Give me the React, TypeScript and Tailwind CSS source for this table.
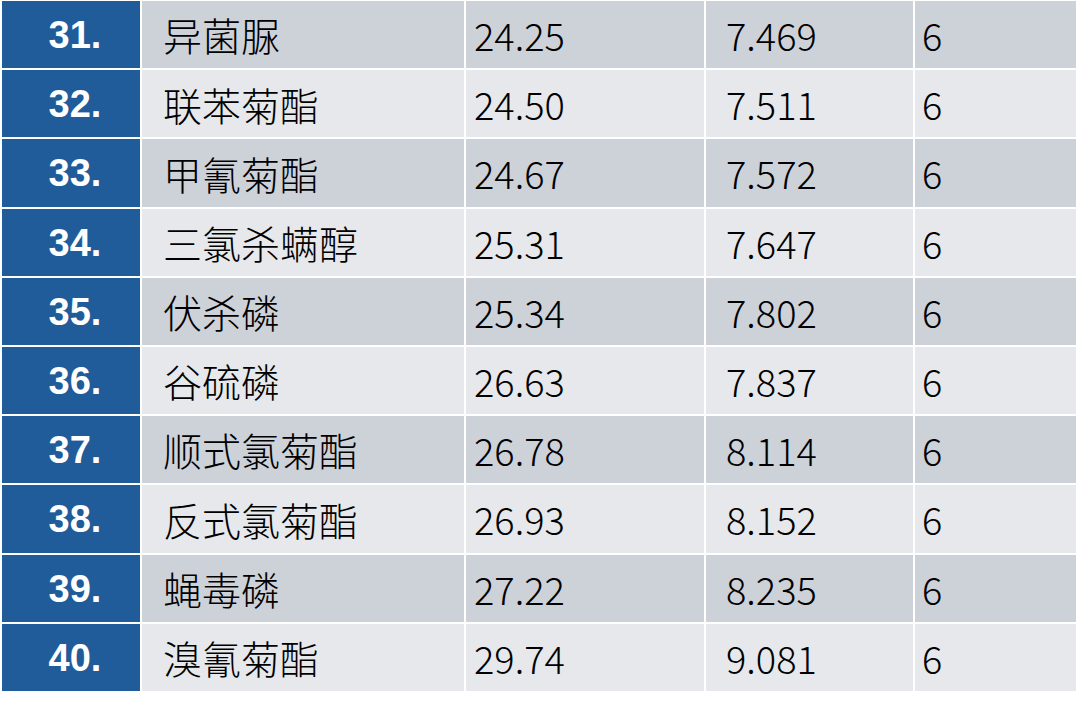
import React from "react";

const rows: [string, string, string, string, string][] = [
  ["31.", "异菌脲", "24.25", "7.469", "6"],
  ["32.", "联苯菊酯", "24.50", "7.511", "6"],
  ["33.", "甲氰菊酯", "24.67", "7.572", "6"],
  ["34.", "三氯杀螨醇", "25.31", "7.647", "6"],
  ["35.", "伏杀磷", "25.34", "7.802", "6"],
  ["36.", "谷硫磷", "26.63", "7.837", "6"],
  ["37.", "顺式氯菊酯", "26.78", "8.114", "6"],
  ["38.", "反式氯菊酯", "26.93", "8.152", "6"],
  ["39.", "蝇毒磷", "27.22", "8.235", "6"],
  ["40.", "溴氰菊酯", "29.74", "9.081", "6"],
];

export default function App() {
  return (
    <div className="w-[1080px] h-[705px] bg-white pl-[2px] pt-[1px] overflow-hidden font-['Noto_Sans_CJK_SC','Noto_Sans',sans-serif]">
      <div className="flex flex-col gap-[2px] w-[1074px]">
        {rows.map((r, i) => {
          const bg = i % 2 === 0 ? "bg-[#cdd1d8]" : "bg-[#e6e8eb]";
          return (
            <div
              key={r[0]}
              className="grid grid-cols-[138px_322px_238px_207px_161px] gap-[2px] h-[67.2px]"
            >
              <div className="bg-[#1f5c99] flex items-center justify-center text-white font-bold text-[38px] pl-[8px] pt-[2px] font-['Liberation_Sans',Arial,sans-serif]">
                {r[0]}
              </div>
              <div className={`${bg} flex items-center pl-[21px] text-[39px] font-light text-black`}>
                {r[1]}
              </div>
              <div className={`${bg} flex items-center pl-[8px] text-[38px] font-light text-black`}>
                {r[2]}
              </div>
              <div className={`${bg} flex items-center pl-[20px] text-[38px] font-light text-black`}>
                {r[3]}
              </div>
              <div className={`${bg} flex items-center pl-[7px] text-[38px] font-light text-black`}>
                {r[4]}
              </div>
            </div>
          );
        })}
      </div>
    </div>
  );
}
